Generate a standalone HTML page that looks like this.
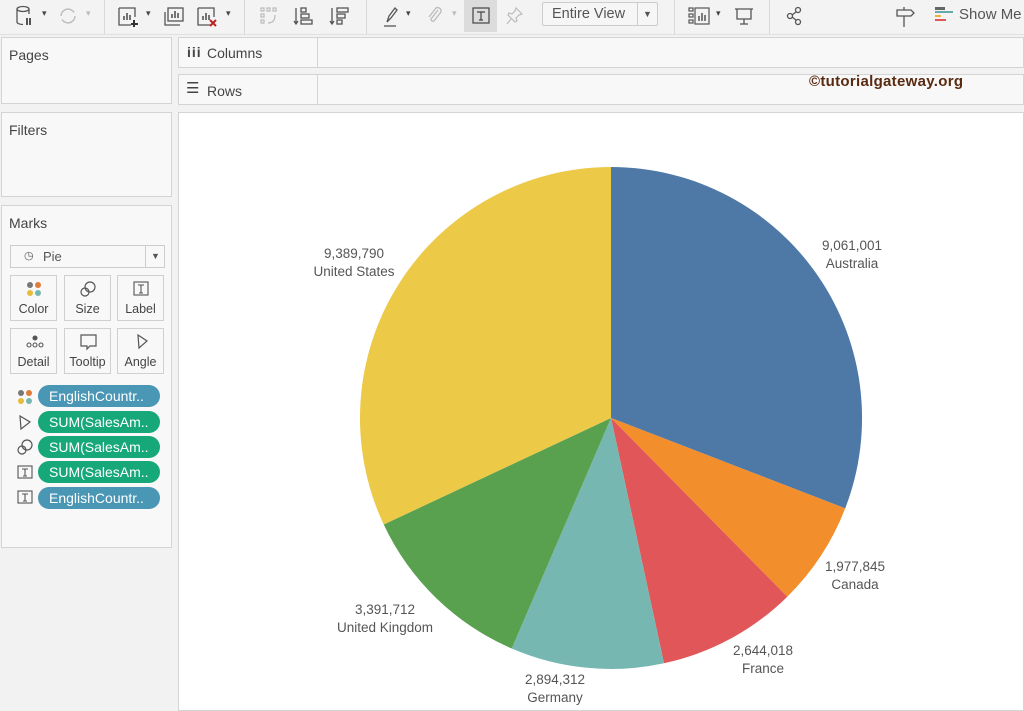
<!DOCTYPE html>
<html><head><meta charset="utf-8"><style>
*{box-sizing:border-box;margin:0;padding:0}
body{width:1024px;height:711px;overflow:hidden;background:#f2f2f2;font-family:"Liberation Sans",sans-serif;position:relative;color:#333}
.tb{position:absolute;left:0;top:0;width:1024px;height:35px;background:#f3f3f3;border-bottom:1px solid #e0e0e0}
.sep{position:absolute;top:0;width:1px;height:34px;background:#d8d8d8}
.ic{position:absolute;top:5px}
.card{position:absolute;background:#f8f8f8;border:1px solid #d4d4d4}
.t{position:absolute;font-size:14px;color:#444}
.shelf{position:absolute;left:178px;width:846px;height:31px;background:#f8f8f8;border:1px solid #d4d4d4}
.btn{position:absolute;width:47px;height:46px;border:1px solid #d0d0d0;background:#f8f8f8;font-size:12.5px;color:#444;text-align:center}
.btn span{position:absolute;bottom:4px;left:0;right:0}
.pill{position:absolute;left:37px;width:122px;height:22px;border-radius:11px;color:#fff;font-size:14px;line-height:22px;padding-left:11px}
.b{background:#4a96b5}.g{background:#17a87a}
.lab{position:absolute;font-size:13.5px;color:#555;text-align:center;line-height:18px}
</style></head><body>
<div class="tb">
<svg class="ic" style="left:14px;top:4px" width="24" height="24" viewBox="0 0 24 24" fill="none" stroke="#555" stroke-width="1.3"><ellipse cx="9" cy="5" rx="6" ry="2.5"/><path d="M3 5v13c0 1.5 3 2.5 6 2.5M15 5v5"/><path d="M13 14v7M16 14v7" stroke-width="2"/></svg>
<div class="t" style="left:42px;top:8px;font-size:9px">▾</div>
<svg class="ic" style="left:57px" width="22" height="22" viewBox="0 0 22 22" fill="none" stroke="#bbb" stroke-width="1.4"><path d="M4 11a7 7 0 0 1 13-3.5M18 11a7 7 0 0 1-13 3.5"/></svg>
<div class="t" style="left:86px;top:8px;font-size:9px;color:#bbb">▾</div>
<div class="sep" style="left:104px"></div>
<svg class="ic" style="left:116px" width="24" height="24" viewBox="0 0 24 24" fill="none" stroke="#555" stroke-width="1.3"><path d="M3 3v17h12M3 3h16v9"/><path d="M8 15v-4M11 15v-7M14 15v-5" stroke-width="1.6"/><path d="M18 15v7M15 19h7" stroke="#333" stroke-width="2"/></svg>
<div class="t" style="left:146px;top:8px;font-size:9px">▾</div>
<svg class="ic" style="left:162px" width="24" height="24" viewBox="0 0 24 24" fill="none" stroke="#555" stroke-width="1.3"><rect x="6" y="3" width="15" height="13"/><path d="M3 7v13h15"/><path d="M10 13v-4M13 13v-7M16 13v-5" stroke-width="1.6"/></svg>
<svg class="ic" style="left:195px" width="24" height="24" viewBox="0 0 24 24" fill="none" stroke="#555" stroke-width="1.3"><path d="M3 3v17h12M3 3h16v9"/><path d="M8 15v-4M11 15v-7M14 15v-5" stroke-width="1.6"/><path d="M15 15l6 6M21 15l-6 6" stroke="#b22" stroke-width="2"/></svg>
<div class="t" style="left:226px;top:8px;font-size:9px">▾</div>
<div class="sep" style="left:244px"></div>
<svg class="ic" style="left:258px" width="22" height="22" viewBox="0 0 22 22" fill="none" stroke="#bbb" stroke-width="1.2"><rect x="3" y="3" width="3" height="3"/><rect x="9" y="3" width="3" height="3"/><rect x="15" y="3" width="3" height="3"/><rect x="3" y="9" width="3" height="3"/><rect x="3" y="15" width="3" height="3"/><path d="M10 18q7 0 7-8"/></svg>
<svg class="ic" style="left:292px" width="22" height="22" viewBox="0 0 22 22" fill="none" stroke="#555" stroke-width="1.3"><path d="M4 3v16M2 16l2 3 2-3"/><rect x="9" y="3" width="5" height="4"/><rect x="9" y="9" width="8" height="4"/><rect x="9" y="15" width="11" height="4"/></svg>
<svg class="ic" style="left:328px" width="22" height="22" viewBox="0 0 22 22" fill="none" stroke="#555" stroke-width="1.3"><path d="M4 3v16M2 16l2 3 2-3"/><rect x="9" y="3" width="11" height="4"/><rect x="9" y="9" width="8" height="4"/><rect x="9" y="15" width="5" height="4"/></svg>
<div class="sep" style="left:366px"></div>
<svg class="ic" style="left:380px" width="22" height="24" viewBox="0 0 22 24" fill="none" stroke="#555" stroke-width="1.3"><path d="M7 17l2-6 6-8 2 2-6 8z"/><path d="M4 21h12"/></svg>
<div class="t" style="left:406px;top:8px;font-size:9px">▾</div>
<svg class="ic" style="left:424px" width="22" height="22" viewBox="0 0 22 22" fill="none" stroke="#bbb" stroke-width="1.3"><path d="M14 5l-7 9a2 2 0 0 0 3 2l7-9a3.5 3.5 0 0 0-5-4l-7 9"/></svg>
<div class="t" style="left:452px;top:8px;font-size:9px;color:#bbb">▾</div>
<div style="position:absolute;left:464px;top:0;width:33px;height:32px;background:#dcdcdc"></div>
<svg class="ic" style="left:470px;top:5px" width="22" height="22" viewBox="0 0 22 22" fill="none" stroke="#444" stroke-width="1.2"><rect x="3" y="3" width="16" height="15"/><path d="M7 7h8M11 7v8M9 15h4"/></svg>
<svg class="ic" style="left:504px" width="22" height="22" viewBox="0 0 22 22" fill="none" stroke="#bbb" stroke-width="1.2"><path d="M12 3l6 6-3 1-3 3 1 3-2 1-7-7 1-2 3 1 3-3z M7 14l-4 5"/></svg>
<div style="position:absolute;left:542px;top:2px;width:116px;height:24px;border:1px solid #ccc;background:#f6f6f6;border-radius:2px;font-size:14.5px;color:#555;line-height:22px;padding-left:9px">Entire View<div style="position:absolute;left:94px;top:0;width:1px;height:22px;background:#ccc"></div><div style="position:absolute;left:100px;top:0;font-size:9px">▼</div></div>
<div class="sep" style="left:674px"></div>
<svg class="ic" style="left:687px" width="26" height="22" viewBox="0 0 26 22" fill="none" stroke="#555" stroke-width="1.2"><rect x="2" y="3" width="4" height="3"/><rect x="2" y="9" width="4" height="3"/><rect x="2" y="15" width="4" height="3"/><rect x="8" y="3" width="14" height="16"/><path d="M12 16v-5M15 16v-8M18 16v-6" stroke-width="1.5"/></svg>
<div class="t" style="left:716px;top:8px;font-size:9px">▾</div>
<svg class="ic" style="left:733px" width="22" height="22" viewBox="0 0 22 22" fill="none" stroke="#555" stroke-width="1.3"><path d="M2 4h18M4 4v10h14V4M11 14v5M7 19h8"/></svg>
<div class="sep" style="left:769px"></div>
<svg class="ic" style="left:785px" width="20" height="22" viewBox="0 0 20 22" fill="none" stroke="#555" stroke-width="1.3"><circle cx="13" cy="5" r="2.5"/><circle cx="5" cy="11" r="2.5"/><circle cx="13" cy="17" r="2.5"/><path d="M7 10l4-3M7 12l4 3"/></svg>
<svg class="ic" style="left:894px" width="22" height="24" viewBox="0 0 22 24" fill="none" stroke="#555" stroke-width="1.3"><path d="M3 5h14l3 3-3 3H3z M10 11v11M10 2v3"/></svg>
<svg class="ic" style="left:934px;top:6px" width="20" height="18" viewBox="0 0 20 18"><rect x="1" y="1" width="10" height="3" fill="#666"/><rect x="1" y="5" width="18" height="2" fill="#6aa"/><rect x="1" y="9" width="6" height="2" fill="#e7b33a"/><rect x="1" y="13" width="11" height="2" fill="#e15759"/></svg>
<div class="t" style="left:959px;top:6px;font-size:15px;color:#555">Show Me</div>
</div>

<div class="card" style="left:1px;top:37px;width:171px;height:67px"><div class="t" style="left:7px;top:9px">Pages</div></div>
<div class="card" style="left:1px;top:112px;width:171px;height:85px"><div class="t" style="left:7px;top:9px">Filters</div></div>
<div class="card" style="left:1px;top:205px;width:171px;height:343px">
<div class="t" style="left:7px;top:9px">Marks</div>
<div style="position:absolute;left:8px;top:39px;width:155px;height:23px;border:1px solid #ccc;background:#f8f8f8;font-size:13px;color:#555;line-height:21px;padding-left:32px">Pie<span style="position:absolute;left:13px;top:0;font-size:11px">◷</span><div style="position:absolute;left:134px;top:0;width:1px;height:21px;background:#ccc"></div><span style="position:absolute;left:140px;top:0;font-size:9px">▼</span></div>
<div class="btn" style="left:8px;top:69px"><svg style="position:absolute;left:15px;top:5px" width="16" height="16"><circle cx="4" cy="4" r="3" fill="#777"/><circle cx="12" cy="4" r="3" fill="#e07b39"/><circle cx="4" cy="12" r="3" fill="#e5bd3a"/><circle cx="12" cy="12" r="3" fill="#76b7b2"/></svg><span>Color</span></div>
<div class="btn" style="left:62px;top:69px"><svg style="position:absolute;left:14px;top:4px" width="18" height="18" fill="none" stroke="#555" stroke-width="1.2"><circle cx="11" cy="7" r="5"/><circle cx="6" cy="12" r="4"/></svg><span>Size</span></div>
<div class="btn" style="left:115px;top:69px"><svg style="position:absolute;left:14px;top:4px" width="18" height="18" fill="none" stroke="#555" stroke-width="1.1"><rect x="2" y="2" width="14" height="13"/><path d="M6 5h6M9 5v8M7 13h4"/></svg><span>Label</span></div>
<div class="btn" style="left:8px;top:122px"><svg style="position:absolute;left:14px;top:5px" width="20" height="16" fill="none" stroke="#555" stroke-width="1.1"><circle cx="10" cy="4" r="2" fill="#555"/><circle cx="4" cy="11" r="2"/><circle cx="10" cy="11" r="2"/><circle cx="16" cy="11" r="2"/></svg><span>Detail</span></div>
<div class="btn" style="left:62px;top:122px"><svg style="position:absolute;left:14px;top:4px" width="20" height="18" fill="none" stroke="#555" stroke-width="1.2"><path d="M2 2h15v11h-6l-3 3v-3H2z"/></svg><span>Tooltip</span></div>
<div class="btn" style="left:115px;top:122px"><svg style="position:absolute;left:16px;top:4px" width="16" height="18" fill="none" stroke="#555" stroke-width="1.2"><path d="M4 2l9 6-8 7z"/></svg><span>Angle</span></div>
<svg style="position:absolute;left:15px;top:183px" width="16" height="16"><circle cx="4" cy="4" r="3" fill="#777"/><circle cx="12" cy="4" r="3" fill="#e07b39"/><circle cx="4" cy="12" r="3" fill="#e5bd3a"/><circle cx="12" cy="12" r="3" fill="#76b7b2"/></svg>
<svg style="position:absolute;left:15px;top:208px" width="16" height="16" fill="none" stroke="#555" stroke-width="1.2"><path d="M3 2l10 6-9 7z"/></svg>
<svg style="position:absolute;left:14px;top:232px" width="18" height="18" fill="none" stroke="#555" stroke-width="1.2"><circle cx="11" cy="7" r="5"/><circle cx="6" cy="12" r="4"/></svg>
<svg style="position:absolute;left:14px;top:258px" width="18" height="16" fill="none" stroke="#555" stroke-width="1.1"><rect x="2" y="2" width="14" height="12"/><path d="M6 5h6M9 5v7M7 12h4"/></svg>
<svg style="position:absolute;left:14px;top:283px" width="18" height="16" fill="none" stroke="#555" stroke-width="1.1"><rect x="2" y="2" width="14" height="12"/><path d="M6 5h6M9 5v7M7 12h4"/></svg>
<div class="pill b" style="top:179px;left:36px">EnglishCountr..</div>
<div class="pill g" style="top:205px;left:36px">SUM(SalesAm..</div>
<div class="pill g" style="top:230px;left:36px">SUM(SalesAm..</div>
<div class="pill g" style="top:255px;left:36px">SUM(SalesAm..</div>
<div class="pill b" style="top:281px;left:36px">EnglishCountr..</div>
</div>

<div class="shelf" style="top:37px"><div style="position:absolute;left:138px;top:0;width:1px;height:29px;background:#d4d4d4"></div><div class="t" style="left:8px;top:6px;font-weight:bold;letter-spacing:1px">iii</div><div class="t" style="left:28px;top:7px">Columns</div></div>
<div class="shelf" style="top:74px"><div style="position:absolute;left:138px;top:0;width:1px;height:29px;background:#d4d4d4"></div><div class="t" style="left:7px;top:4px;font-size:15px">☰</div><div class="t" style="left:28px;top:8px">Rows</div>
<div class="t" style="left:630px;top:-2px;font-size:15px;font-weight:bold;color:#5a2a10;letter-spacing:0.3px">©tutorialgateway.org</div></div>

<div style="position:absolute;left:178px;top:112px;width:846px;height:599px;background:#fff;border:1px solid #d4d4d4"></div>
<svg style="position:absolute;left:0;top:0" width="1024" height="711">
<path d="M611 418L611 167A251 251 0 0 1 845.2 508.4Z" fill="#4e79a7"/>
<path d="M611 418L845.2 508.4A251 251 0 0 1 787.3 596.7Z" fill="#f28e2b"/>
<path d="M611 418L787.3 596.7A251 251 0 0 1 664 663.3Z" fill="#e15759"/>
<path d="M611 418L664 663.3A251 251 0 0 1 511.7 648.5Z" fill="#76b7b2"/>
<path d="M611 418L511.7 648.5A251 251 0 0 1 383.7 524.5Z" fill="#59a14f"/>
<path d="M611 418L383.7 524.5A251 251 0 0 1 611 167Z" fill="#edc948"/>
</svg>
<div class="lab" style="left:300px;top:245px;width:108px">9,389,790<br>United States</div>
<div class="lab" style="left:806px;top:237px;width:92px">9,061,001<br>Australia</div>
<div class="lab" style="left:810px;top:558px;width:90px">1,977,845<br>Canada</div>
<div class="lab" style="left:718px;top:642px;width:90px">2,644,018<br>France</div>
<div class="lab" style="left:510px;top:671px;width:90px">2,894,312<br>Germany</div>
<div class="lab" style="left:325px;top:601px;width:120px">3,391,712<br>United Kingdom</div>
</body></html>
